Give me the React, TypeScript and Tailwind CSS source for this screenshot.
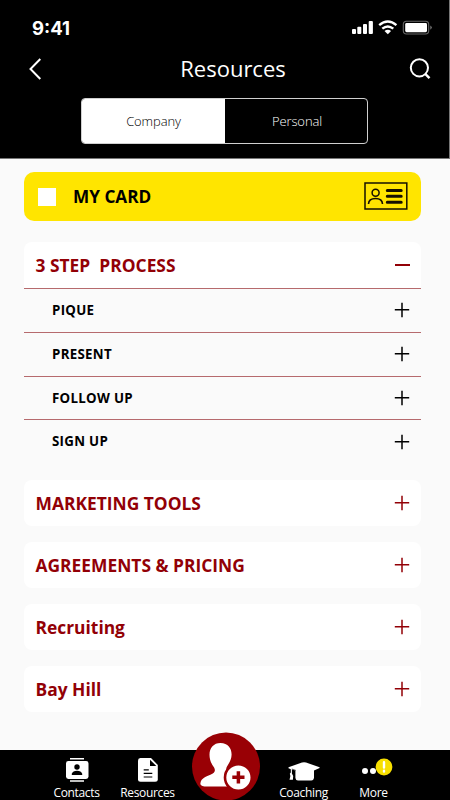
import type { ReactNode } from "react";

const STEPS = ["PIQUE", "PRESENT", "FOLLOW UP", "SIGN UP"];

const SECTIONS = ["MARKETING TOOLS", "AGREEMENTS & PRICING", "Recruiting", "Bay Hill"];

function PlusIcon({ className }: { className: string }) {
  return (
    <svg width="16" height="16" viewBox="0 0 16 16" className={className}>
      <path d="M8 .8v14.4M.8 7.8h14.4" stroke="currentColor" strokeWidth="1.5" fill="none" />
    </svg>
  );
}

function StatusBar() {
  return (
    <div className="flex h-[46px] items-start justify-between pl-8 pr-[16px]">
      <span className="mt-[15px] font-[Inter,sans-serif] text-[18.5px] font-bold leading-[26px]">9:41</span>
      <svg width="82" height="16" viewBox="0 0 82 16" className="mt-5">
        <g fill="#fff">
          <rect x="1" y="9" width="4" height="5" rx="1" />
          <rect x="6.3" y="6.7" width="4" height="7.3" rx="1" />
          <rect x="12" y="4" width="4" height="10" rx="1" />
          <rect x="17.7" y="1" width="4.2" height="13" rx="1" />
          <path d="M36.8 14.2 33.5 11q3.3-2.6 6.6 0Z" />
        </g>
        <g fill="none" stroke="#fff" strokeWidth="2.4">
          <path d="M28.2 5.2q8.6-7.3 17.2 0" />
          <path d="M31.3 8.7q5.5-4.6 11 0" />
        </g>
        <rect x="52.3" y="1.2" width="25.4" height="12.8" rx="3.2" fill="none" stroke="#666" strokeWidth="1.1" />
        <rect x="54.2" y="3" width="21.8" height="9.2" rx="1.4" fill="#fff" />
        <path d="M79.3 5.4q3 2.2 0 4.4Z" fill="#777" />
      </svg>
    </div>
  );
}

function Header() {
  return (
    <header className="h-[159px] border-b border-r border-[#777] bg-black text-white">
      <StatusBar />
      <div className="flex h-[46px] items-center pl-7 pr-[17px]">
        <svg width="15" height="24" viewBox="0 0 15 24" fill="none" stroke="#fff" strokeWidth="2">
          <path d="M12.3 2 2.5 12l9.8 10" />
        </svg>
        <h1 className="flex-1 pb-0.5 pl-[15px] text-center text-[22px] leading-[30px]">Resources</h1>
        <svg width="24" height="24" viewBox="0 0 24 24" fill="none" stroke="#fff" strokeWidth="2">
          <circle cx="11.4" cy="10.8" r="8.6" />
          <path d="m17.2 16.8 4.3 4.4" strokeWidth="2.4" />
        </svg>
      </div>
      <div className="ml-[81px] mt-1.5 flex h-[46px] w-[287px] overflow-hidden rounded border-[1.5px] border-[#d0d0d0] text-[13px] tracking-[-0.1px]">
        <div className="flex w-[143px] items-center justify-center bg-white pt-0.5 font-light text-black">Company</div>
        <div className="flex flex-1 items-center justify-center pl-0.5 pt-0.5 font-light">Personal</div>
      </div>
    </header>
  );
}

function MyCard() {
  return (
    <div className="flex h-[49px] items-center rounded-[10px] bg-[#ffe500] pl-3.5 pr-[13px]">
      <div className="size-[18px] bg-white" />
      <span className="ml-[17px] flex-1 pt-px text-[17.2px] font-bold">MY CARD</span>
      <svg width="44" height="28" viewBox="0 0 44 28" fill="none" stroke="#151000" className="-mt-0.5">
        <rect x="1" y="1" width="41.8" height="26" strokeWidth="1.5" />
        <circle cx="11.6" cy="10.8" r="3.5" strokeWidth="1.5" />
        <path d="M4.5 22q.2-5.5 7-5.5t7 5.5" strokeWidth="1.6" />
        <path d="M23.3 8.5h13.9M23.3 14.3h13.9M23.3 20.2h13.9" strokeWidth="3" strokeLinecap="round" />
      </svg>
    </div>
  );
}

function SectionTitle({ children }: { children: ReactNode }) {
  return <h2 className="whitespace-pre text-[17.4px] font-bold leading-6 text-[#920006]">{children}</h2>;
}

function NavItem({ label, children }: { label: string; children: ReactNode }) {
  return (
    <div className="flex w-[71px] flex-col items-center">
      <div className="flex h-[35px] shrink-0 items-end">{children}</div>
      <span className="text-xs leading-[15px] tracking-[-0.35px]">{label}</span>
    </div>
  );
}

function BottomNav() {
  return (
    <nav className="flex h-[50px] bg-black pl-[41px] text-white">
      <NavItem label="Contacts">
        <svg width="24" height="28" viewBox="0 0 24 28">
          <path fill="#fff" d="M5 1h14v1.6H5zM5 23.2h14v1.6H5z" />
          <rect x="1" y="4" width="22.5" height="18" rx="2.4" fill="#fff" />
          <circle cx="12" cy="10" r="2.7" />
          <path d="M6.8 18v-1.2q1-3 5.2-3t5.2 3V18Z" />
        </svg>
      </NavItem>
      <NavItem label="Resources">
        <svg width="22" height="28" viewBox="0 0 22 28">
          <path fill="#fff" d="M3.3 1H14l6.8 7v14.3q0 2.5-2.6 2.5H3.6Q1 24.8 1 22.3V3.5Q1 1 3.3 1Z" />
          <path d="M13 2.7V9h6.3Z" />
          <path d="M6.7 12.8h5.1M6.7 16.4h8.6M6.7 20h8.6" stroke="#000" strokeWidth="1.2" />
        </svg>
      </NavItem>
      <div className="-mt-[18px] flex w-[85px] justify-center">
        <svg width="68" height="68" viewBox="0 0 68 68">
          <circle cx="34" cy="34.5" r="34" fill="#990005" />
          <path
            fill="#fff"
            d="M28.4 11C36 11 39.6 16.3 39.6 22.5c0 6-3.8 10.2-5 12.8-.8 3 .2 5.1 3.8 6.2 3.3 1.3 7.3 2.6 8.6 5.5 1.2 3 1.2 7.5-3 7.5H14c-4.3 0-5.8-1.5-5.6-3.3.7-4.8 5-6.4 10-8.4 4.4-1.5 5.4-4 3.7-7.2-2.4-3.2-4.6-7.4-4.6-12.8 0-7 4.3-11.8 10.9-11.8Z"
          />
          <circle cx="46.4" cy="45.5" r="13.4" fill="#fff" stroke="#990005" strokeWidth="2.6" />
          <path d="M46.4 39.2v12.2M40.3 45.3h12.2" stroke="#990005" strokeWidth="3.5" />
        </svg>
      </div>
      <NavItem label="Coaching">
        <svg width="34" height="22" viewBox="0 0 34 22" fill="#fff" className="mb-[3px]">
          <path d="M1.5 7.2 15 2.4q2.1-.5 4 0l13.6 4.8v.9l-5.6 2.5v7.4q-.6 2.5-2.6 2.5H11q-2.2 0-2.6-2.5v-7.4l-3.5-1v4l1.3 2.4-.3 3.7H2.5l.9-3.7-.6-2.2 1-1.4V9.2L1.5 8.2Z" />
          <path d="m4.8 9 4 1.4" stroke="#000" strokeWidth=".6" />
        </svg>
      </NavItem>
      <div className="-ml-px">
        <NavItem label="More">
          <div className="relative flex h-[29px] w-6 items-center gap-[2px]">
            <span className="size-1.5 rounded-full bg-white" />
            <span className="size-1.5 rounded-full bg-white" />
            <svg width="18" height="18" viewBox="0 0 18 18" className="absolute left-[13px] top-[2px]">
              <circle cx="9" cy="9" r="8.4" fill="#f7df00" />
              <path d="M9 4.2v5.4M9 12.8v.8" stroke="#fff" strokeWidth="2.4" strokeLinecap="round" />
            </svg>
          </div>
        </NavItem>
      </div>
    </nav>
  );
}

export default function App() {
  return (
    <div className="flex h-[800px] w-[450px] flex-col overflow-hidden bg-[#fafafa] font-['Open_Sans',sans-serif]">
      <Header />
      <main className="flex-1 pl-6 pr-[29px] pt-[13px]">
        <MyCard />

        <section className="mt-[21px]">
          <div className="flex h-[46px] items-center justify-between rounded-t-lg bg-white pl-[11.5px] pr-[11px]">
            <SectionTitle>{"3 STEP  PROCESS"}</SectionTitle>
            <span className="h-[1.5px] w-[15px] bg-[#920006]" />
          </div>
          {STEPS.map((step) => (
            <div
              key={step}
              className="flex h-[43.8px] items-center justify-between border-t border-[#b66a6d] pl-7 pr-[11px]"
            >
              <span className="pt-px text-[13.3px] font-bold tracking-[0.3px]">{step}</span>
              <PlusIcon className="text-black" />
            </div>
          ))}
        </section>

        <div className="mt-[17px] flex flex-col gap-4">
          {SECTIONS.map((title) => (
            <div
              key={title}
              className="flex h-[46px] items-center justify-between rounded-lg bg-white pl-[11.5px] pr-[11px]"
            >
              <SectionTitle>{title}</SectionTitle>
              <PlusIcon className="text-[#920006]" />
            </div>
          ))}
        </div>
      </main>
      <BottomNav />
    </div>
  );
}
